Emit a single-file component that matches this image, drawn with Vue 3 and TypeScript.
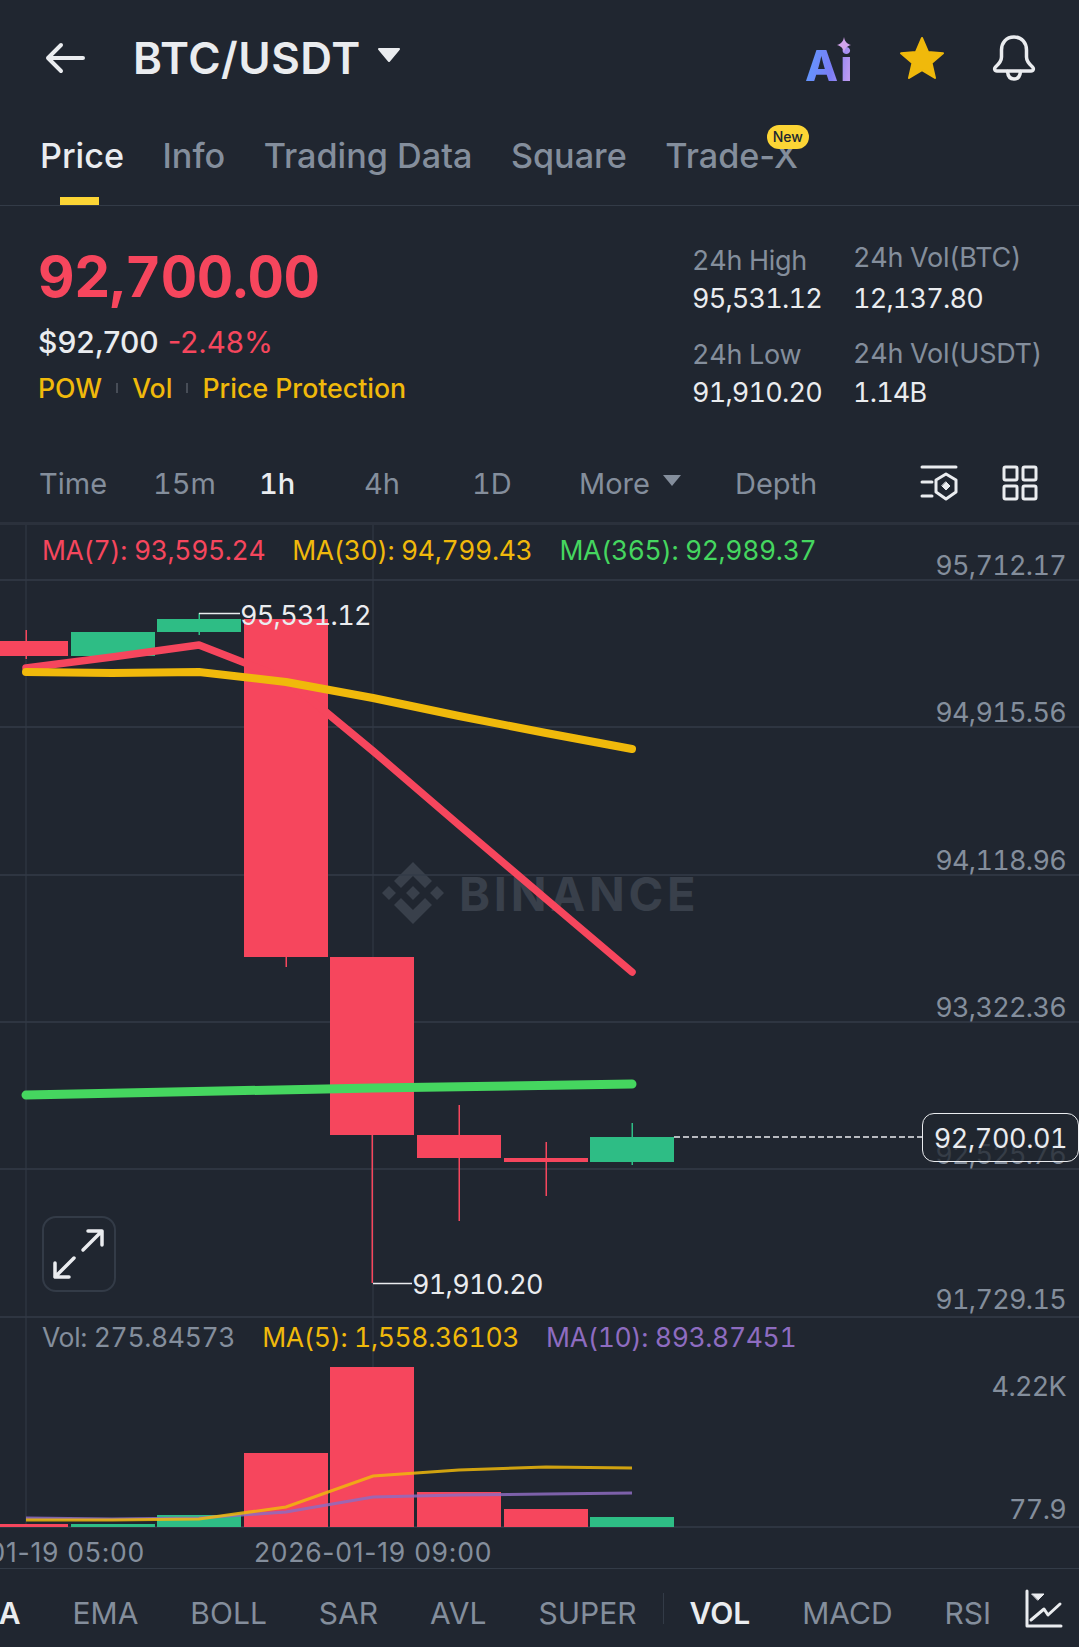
<script setup lang="ts">
type Candle = { x: number; open: number; close: number; high: number; low: number; up?: boolean; volTop: number };

const tabs = ["Price", "Info", "Trading Data", "Square", "Trade-X"];
const intervals = ["Time", "15m", "1h", "4h", "1D"];
const indicators = ["EMA", "BOLL", "SAR", "AVL", "SUPER"];
const subIndicators = ["VOL", "MACD", "RSI"];

// page coordinates, the svg viewBox starts at the top of the chart
const chartTop = 525;

const candles: Candle[] = [
  { x: -16, open: 641, close: 656, high: 630, low: 659, volTop: 1524 },
  { x: 71, open: 632, close: 656, high: 632, low: 656, up: true, volTop: 1524 },
  { x: 157, open: 619, close: 632, high: 613, low: 635, up: true, volTop: 1515 },
  { x: 244, open: 619, close: 957, high: 619, low: 967, volTop: 1453 },
  { x: 330, open: 957, close: 1135, high: 957, low: 1283, volTop: 1367 },
  { x: 417, open: 1135, close: 1158, high: 1105, low: 1221, volTop: 1492 },
  { x: 504, open: 1158, close: 1162, high: 1142, low: 1196, volTop: 1509 },
  { x: 590, open: 1137, close: 1162, high: 1123, low: 1165, up: true, volTop: 1517 },
];

const gridLines = [580, 727, 875, 1022, 1169, 1317, 1527];

const maLines = [
  { color: "#f6465d", width: 7.5, points: "26,668 112,657 199,645 286,679 373,751 459,825 546,899 632,972" },
  { color: "#f0b90b", width: 8, points: "26,672 112,673 199,672 286,682 373,698 459,716 546,733 632,749" },
  { color: "#45d65f", width: 9, points: "26,1095 373,1088 632,1084" },
];
const volLines = [
  { color: "#8e6cc0", points: "26,1518 112,1519 199,1518 286,1512 373,1497 459,1495 546,1494 632,1493" },
  { color: "#f0b90b", points: "26,1520 112,1520 199,1519 286,1507 373,1476 459,1470 546,1467 632,1468" },
];

const axisLabels = [
  { text: "95,712.17", y: 566 },
  { text: "94,915.56", y: 713 },
  { text: "94,118.96", y: 861 },
  { text: "93,322.36", y: 1008 },
  { text: "92,525.76", y: 1155 },
  { text: "91,729.15", y: 1300 },
  { text: "4.22K", y: 1387 },
  { text: "77.9", y: 1510 },
];
const stats = [
  { label: "24h High", value: "95,531.12", cls: "" },
  { label: "24h Vol(BTC)", value: "12,137.80", cls: "lift-top" },
  { label: "24h Low", value: "91,910.20", cls: "" },
  { label: "24h Vol(USDT)", value: "1.14B", cls: "lift-low" },
];

const top = (y: number) => `${y - chartTop}px`;
</script>

<template>
  <div class="page">
    <header class="topbar">
      <svg class="back" width="44" height="34" viewBox="0 0 44 34" fill="none" stroke="#eaecef" stroke-width="4" stroke-linecap="round" stroke-linejoin="round">
        <path d="M39 17H4M17 4 4 17l13 13" />
      </svg>
      <h1 class="pair">BTC/USDT</h1>
      <svg class="caret" width="24" height="16" viewBox="0 0 24 16"><path d="M2 2h20L12 14z" fill="#eaecef" stroke="#eaecef" stroke-width="2" stroke-linejoin="round" /></svg>
      <div class="actions">
        <div class="ai">
          <span class="ai-text">Ai</span>
          <svg class="spark" width="14" height="16" viewBox="0 0 14 16"><path d="M7 0c.8 4.400 2.400 6.600 7 8-4.600 1.400-6.200 3.600-7 8-.8-4.400-2.400-6.600-7-8 4.600-1.400 6.200-3.600 7-8z" fill="#d3a4ec" /></svg>
        </div>
        <svg width="48" height="46" viewBox="0 0 46 46"><path d="M23 3l6 14 15 1.300-11.400 9.800L36 43l-13-7.800L10 43l3.400-14.900L2 18.300 17 17z" fill="#f0b90b" stroke="#f0b90b" stroke-width="2" stroke-linejoin="round" /></svg>
        <svg width="46" height="48" viewBox="0 0 46 48" fill="none" stroke="#eaecef" stroke-width="3.500" stroke-linecap="round" stroke-linejoin="round">
          <path d="M23 3c-8 0-12.500 6-12.500 13v7c0 4-2 6.500-6 10-1.500 1.500-1 4 1.500 4h34c2.500 0 3-2.500 1.500-4-4-3.500-6-6-6-10v-7C35.500 9 31 3 23 3z" />
          <path d="M16.500 37.500c.5 5 3 7.500 6.500 7.500s6-2.500 6.500-7.500" />
        </svg>
      </div>
    </header>

    <nav class="tabs">
      <span v-for="(tab, i) in tabs" :key="tab" class="tab" :class="{ active: i === 0 }">
        {{ tab }}
        <i v-if="i === 0" class="tab-bar"></i>
        <b v-if="tab === 'Trade-X'" class="new">New</b>
      </span>
    </nav>

    <section class="summary">
      <div class="quote">
        <div class="last">92,700.00</div>
        <div class="fiat"><span>$92,700</span><span class="change">-2.48%</span></div>
        <div class="tags">
          <span>POW</span><i></i><span>Vol</span><i></i><span>Price Protection</span>
        </div>
      </div>
      <div class="stats">
        <div v-for="s in stats" :key="s.label" class="stat" :class="s.cls">
          <span class="stat-label">{{ s.label }}</span>
          <span class="stat-value">{{ s.value }}</span>
        </div>
      </div>
    </section>

    <div class="intervals">
      <span v-for="(item, i) in intervals" :key="item" :class="{ current: i === 2 }">{{ item }}</span>
      <span class="more">More <svg width="20" height="13" viewBox="0 0 20 13"><path d="M1 1h18l-9 11z" fill="#848e9c" /></svg></span>
      <span>Depth</span>
      <svg class="tool-a" width="38" height="38" viewBox="0 0 38 38" fill="none" stroke="#eaecef" stroke-width="3" stroke-linecap="round" stroke-linejoin="round">
        <path d="M2 3h34M2 18h10M2 32h10" />
        <path d="M26 10l10 6v12l-10 7-10-7V16z" />
        <path d="M26 18l4 4-4 4-4-4z" fill="#eaecef" stroke-width="1" />
      </svg>
      <svg class="tool-b" width="36" height="36" viewBox="0 0 36 36" fill="none" stroke="#eaecef" stroke-width="3" stroke-linejoin="round">
        <rect x="2" y="2" width="13" height="13" rx="1.500" />
        <rect x="21" y="2" width="13" height="13" rx="1.500" />
        <rect x="2" y="21" width="13" height="13" rx="1.500" />
        <rect x="21" y="21" width="13" height="13" rx="1.500" />
      </svg>
    </div>

    <div class="chart">
      <div class="watermark">
        <svg width="62" height="62" viewBox="0 0 32 32"><path d="M9.800 13.400 16 7.200l6.200 6.200 3.600-3.600L16 0 6.200 9.800zM0 16l3.600-3.600L7.200 16l-3.600 3.600zM9.800 18.600l6.200 6.200 6.200-6.200 3.600 3.600L16 32l-9.800-9.800zM24.800 16l3.600-3.600L32 16l-3.600 3.600zM19.600 16 16 12.400 12.400 16l3.600 3.600z" fill="#39404b" /></svg>
        <span>BINANCE</span>
      </div>

      <svg class="plot" width="1079" height="1043" :viewBox="`0 ${chartTop} 1079 1043`">
        <line v-for="y in gridLines" :key="y" x1="0" x2="1079" :y1="y" :y2="y" stroke="#333b47" stroke-width="1.500" />
        <line x1="26" x2="26" :y1="chartTop" y2="1527" stroke="#333b47" stroke-width="1" />
        <line x1="373" x2="373" :y1="chartTop" y2="1527" stroke="#333b47" stroke-width="1" />

        <g v-for="c in candles" :key="c.x" :fill="c.up ? '#2ebd85' : '#f6465d'">
          <rect :x="c.x + 41.500" :y="c.high" width="1.500" :height="c.low - c.high" />
          <rect :x="c.x" :y="c.open" width="84" :height="c.close - c.open" />
          <rect :x="c.x" :y="c.volTop" width="84" :height="1527 - c.volTop" />
        </g>

        <polyline v-for="l in maLines" :key="l.color" :points="l.points" fill="none" :stroke="l.color" :stroke-width="l.width" stroke-linecap="round" stroke-linejoin="round" />
        <polyline v-for="l in volLines" :key="l.color" :points="l.points" fill="none" :stroke="l.color" stroke-width="3" stroke-opacity="0.85" />

        <path d="M199 613.500H240M373 1283.500H412" stroke="#eaecef" stroke-width="1.500" fill="none" />
        <line x1="674" x2="922" y1="1137" y2="1137" stroke="#eaecef" stroke-width="1.500" stroke-dasharray="6 3" />
      </svg>

      <div class="legend price-legend">
        <span class="red">MA(7): 93,595.24</span>
        <span class="yellow">MA(30): 94,799.43</span>
        <span class="green">MA(365): 92,989.37</span>
      </div>
      <div class="legend vol-legend">
        <span class="grey">Vol: 275.84573</span>
        <span class="yellow">MA(5): 1,558.36103</span>
        <span class="purple">MA(10): 893.87451</span>
      </div>

      <span v-for="a in axisLabels" :key="a.text" class="axis" :style="{ top: top(a.y) }">{{ a.text }}</span>
      <span class="peak high">95,531.12</span>
      <span class="peak low">91,910.20</span>
      <span class="now">92,700.01</span>

      <button class="expand">
        <svg width="70" height="72" viewBox="44 1218 70 72" fill="none" stroke="#eaecef" stroke-width="3.500" stroke-linecap="round" stroke-linejoin="round">
          <path d="M83 1250 102 1231M88 1231h14v14" />
          <path d="M74 1258 55 1277M55 1263v14h14" />
        </svg>
      </button>

      <span class="stamp first">2026-01-19 05:00</span>
      <span class="stamp second">2026-01-19 09:00</span>
    </div>

    <footer class="indicators">
      <span class="current-ma">MA</span>
      <span v-for="item in indicators" :key="item">{{ item }}</span>
      <i class="split"></i>
      <span v-for="(item, i) in subIndicators" :key="item" :class="{ 'current-sub': i === 0 }">{{ item }}</span>
      <svg class="line-icon" width="38" height="40" viewBox="0 0 38 40" fill="none" stroke="#eaecef" stroke-width="3" stroke-linejoin="round" stroke-linecap="round">
        <path d="M2 2v35h34" />
        <path d="M6 31l13-11 4 6 12-11" />
        <path d="M7 5h12l-6 6z" fill="#eaecef" stroke-width="1" />
      </svg>
    </footer>
  </div>
</template>

<style>
html,
body {
  margin: 0;
  background: #202630;
}
</style>

<style scoped>
.page {
  width: 1079px;
  height: 1647px;
  overflow: hidden;
  display: flex;
  flex-direction: column;
  background: #202630;
  color: #eaecef;
  font-family: Inter, "Liberation Sans", sans-serif;
  font-variant-numeric: tabular-nums;
}

.topbar {
  height: 115px;
  display: flex;
  align-items: center;
  padding: 0 42px 0 44px;
  box-sizing: border-box;
  flex: none;
}

.back {
  margin-right: 45px;
}

.pair {
  margin: 0;
  font-size: 44px;
  font-weight: 600;
  letter-spacing: 0.5px;
}

.caret {
  margin: -6px 0 0 16px;
}

.actions {
  margin-left: auto;
  display: flex;
  align-items: center;
  gap: 45px;
}

.ai {
  position: relative;
  width: 48px;
  height: 44px;
  margin-top: 14px;
}

.ai-text {
  font-size: 43px;
  line-height: 44px;
  font-weight: 800;
  letter-spacing: 2px;
  background: linear-gradient(100deg, #5b9dff 0%, #7b7cf5 55%, #d9a6ee 100%);
  -webkit-background-clip: text;
  background-clip: text;
  color: transparent;
}

.spark {
  position: absolute;
  right: 2px;
  top: -6px;
}

.tabs {
  height: 91px;
  display: flex;
  gap: 38.5px;
  padding-left: 40px;
  border-bottom: 1.5px solid #333b47;
  box-sizing: border-box;
  flex: none;
  font-variant-numeric: normal;
}

.tab {
  position: relative;
  font-size: 34.2px;
  line-height: 40px;
  padding-top: 21px;
  color: #848e9c;
  font-weight: 500;
}

.tab.active {
  color: #eaecef;
}

.tab-bar {
  position: absolute;
  left: 20px;
  bottom: 0;
  width: 39px;
  height: 8px;
  background: #fcd535;
}

.new {
  position: absolute;
  right: -11px;
  top: 10px;
  height: 24px;
  line-height: 24px;
  padding: 0 6px;
  border-radius: 12px;
  background: #fcd535;
  color: #202630;
  font-size: 14px;
  font-weight: 500;
}

.summary {
  height: 234px;
  display: flex;
  justify-content: space-between;
  padding: 0 39px 0 38px;
  box-sizing: border-box;
  flex: none;
}

.last {
  margin-top: 36px;
  font-size: 56.5px;
  line-height: 70px;
  font-weight: 700;
  color: #f6465d;
  letter-spacing: -0.5px;
}

.fiat {
  margin-top: 12px;
  display: flex;
  gap: 9px;
  font-size: 30px;
  line-height: 36px;
  font-weight: 500;
  font-variant-numeric: normal;
}

.change {
  color: #f6465d;
  font-weight: 400;
  font-size: 29.5px;
}

.tags {
  margin-top: 11px;
  display: flex;
  align-items: center;
  gap: 14px;
  font-size: 26.7px;
  line-height: 34px;
  font-weight: 500;
  color: #f0b90b;
}

.tags i {
  width: 2px;
  height: 10px;
  background: #474d57;
}

.stats {
  display: grid;
  grid-template-columns: 161px 187px;
  grid-auto-rows: 94px;
  padding-top: 38px;
  align-items: start;
}

.stat {
  display: flex;
  flex-direction: column;
  gap: 4px;
  height: 72px;
  justify-content: flex-end;
  white-space: nowrap;
}

.stat-label {
  font-size: 27px;
  line-height: 34px;
  letter-spacing: -0.3px;
  color: #848e9c;
}

.stat-value {
  font-size: 27px;
  line-height: 34px;
  letter-spacing: -0.8px;
}

.lift-top .stat-label {
  margin-bottom: 3px;
}

.lift-low .stat-label {
  margin-bottom: 1px;
}

.intervals {
  height: 82px;
  display: grid;
  grid-template-columns: 114px 106px 105px 108px 107px 156px 185px 82px 34px;
  align-items: center;
  padding: 4px 0 0 39px;
  box-sizing: border-box;
  font-size: 29px;
  color: #848e9c;
  flex: none;
}

.intervals .current {
  color: #eaecef;
  font-weight: 500;
}

.more {
  display: flex;
  align-items: center;
  gap: 12px;
}

.more svg {
  margin-top: -6px;
}

.chart {
  position: relative;
  height: 1043px;
  flex: none;
  border-top: 3px solid #2b313c;
  border-bottom: 1.5px solid #333b47;
}

.plot {
  position: absolute;
  left: 0;
  top: 0;
}

.watermark {
  position: absolute;
  left: 382px;
  top: 337px;
  display: flex;
  align-items: center;
  gap: 15px;
  font-size: 47px;
  font-weight: 700;
  letter-spacing: 3.7px;
  color: #39404b;
}

.legend {
  position: absolute;
  left: 42px;
  display: flex;
  font-size: 26.5px;
  line-height: 32px;
  letter-spacing: -0.35px;
  gap: 27px;
  white-space: nowrap;
}

.price-legend {
  top: 9px;
}

.vol-legend {
  top: 796px;
}

.red {
  color: #f6465d;
}

.yellow {
  color: #f0b90b;
}

.green {
  color: #45d65f;
}

.purple {
  color: #8e6cc0;
}

.grey {
  color: #848e9c;
}

.axis {
  position: absolute;
  right: 13px;
  transform: translateY(-50%);
  font-size: 27px;
  line-height: 32px;
  letter-spacing: -0.7px;
  color: #848e9c;
}

.peak {
  position: absolute;
  font-size: 27px;
  line-height: 32px;
  letter-spacing: -0.7px;
}

.peak.high {
  left: 240px;
  top: 75px;
}

.peak.low {
  left: 412px;
  top: 744px;
}

.now {
  position: absolute;
  left: 922px;
  top: 588px;
  width: 157px;
  height: 49px;
  box-sizing: border-box;
  border: 1.5px solid #eaecef;
  border-radius: 12px;
  background: rgba(32, 38, 48, 0.78);
  font-size: 27px;
  line-height: 50px;
  letter-spacing: -0.4px;
  text-align: center;
}

.expand {
  position: absolute;
  left: 42px;
  top: 691px;
  width: 74px;
  height: 76px;
  padding: 0;
  border: 2px solid #333b47;
  border-radius: 14px;
  background: transparent;
}

.expand svg {
  display: block;
}

.stamp {
  position: absolute;
  top: 1011px;
  transform: translateX(-50%);
  font-size: 26.5px;
  line-height: 32px;
  letter-spacing: 0.75px;
  font-variant-numeric: normal;
  color: #848e9c;
  white-space: nowrap;
}

.stamp.first {
  left: 26px;
}

.stamp.second {
  left: 373px;
}

.indicators {
  flex: 1;
  display: flex;
  align-items: center;
  gap: 52px;
  margin-left: -29px;
  padding-top: 10px;
  font-size: 30px;
  color: #848e9c;
}

.indicators svg {
  margin-top: -8px;
}

.current-ma,
.current-sub {
  color: #eaecef;
  font-weight: 600;
}

.split {
  width: 1px;
  height: 31px;
  margin: -10px -26px 0;
  background: #333b47;
}

.line-icon {
  margin-left: -18px;
}
</style>
